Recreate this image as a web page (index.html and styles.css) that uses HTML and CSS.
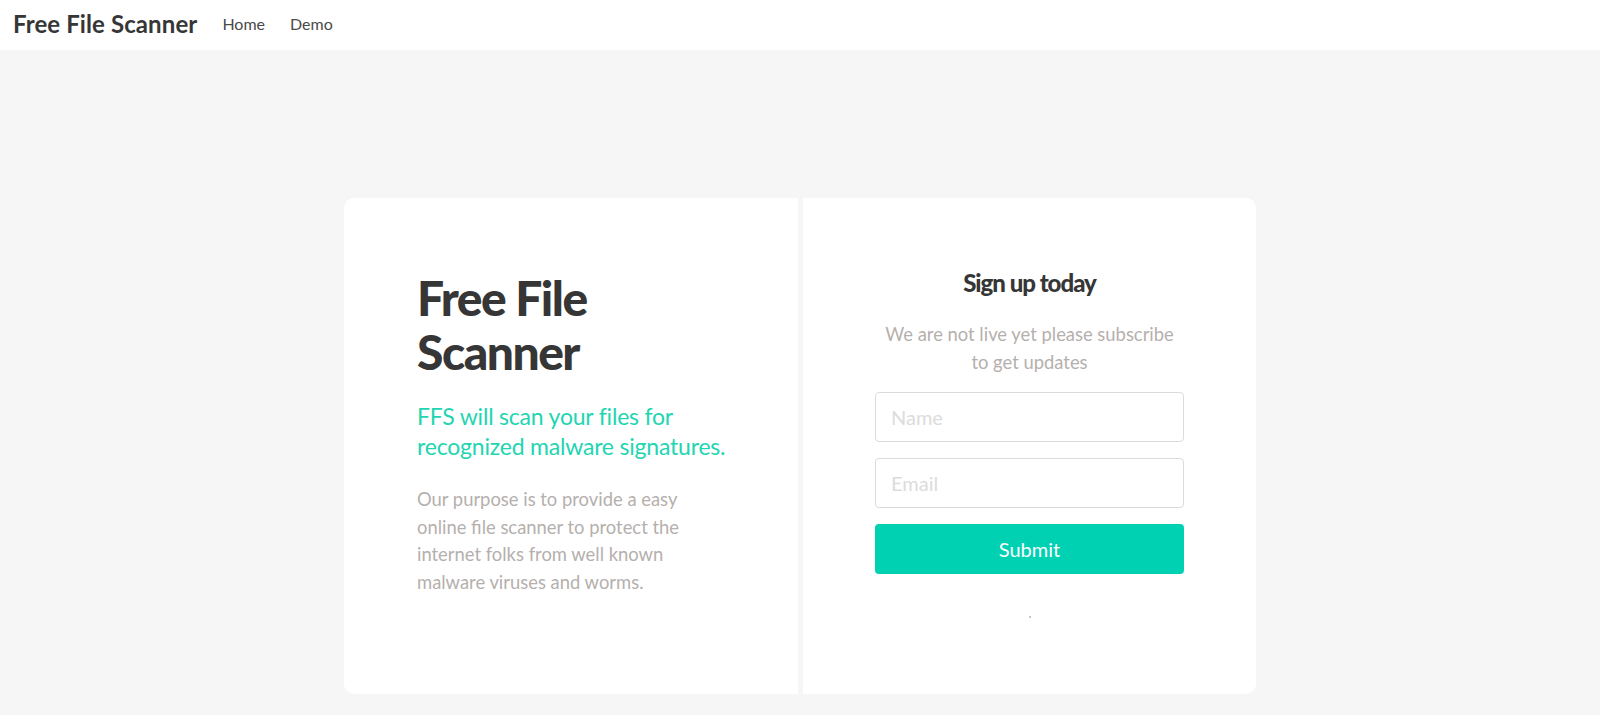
FILE: index.html
```html
<!DOCTYPE html>
<html lang="en">
<head>
<meta charset="utf-8">
<title>Free File Scanner</title>
<link rel="stylesheet" href="styles.css">
</head>
<body>
<nav class="navbar">
  <a class="brand" href="#">Free File Scanner</a>
  <a class="nav-item" href="#">Home</a>
  <a class="nav-item" href="#">Demo</a>
</nav>
<main class="page">
  <div class="card-pair">
    <section class="panel panel-left">
      <h1 class="title">Free File Scanner</h1>
      <h2 class="subtitle">FFS will scan your files for recognized malware signatures.</h2>
      <p class="lead">Our purpose is to provide a easy online file scanner to protect the internet folks from well known malware viruses and worms.</p>
    </section>
    <section class="panel panel-right">
      <h3 class="form-title">Sign up today</h3>
      <p class="lead centered">We are not live yet please subscribe to get updates</p>
      <form class="signup">
        <input class="field" type="text" placeholder="Name">
        <input class="field" type="email" placeholder="Email">
        <button class="submit" type="button">Submit</button>
      </form>
      <div class="dot-row"><span class="dot"></span></div>
    </section>
  </div>
</main>
</body>
</html>
```
FILE: styles.css
```css
* { box-sizing: border-box; }
html, body { margin: 0; padding: 0; }
body {
  background: #f6f6f6;
  font-family: "Lato", "Open Sans", sans-serif;
  color: #4a4a4a;
  min-height: 715px;
}
.navbar {
  height: 50px;
  background: #fff;
  display: flex;
  align-items: center;
  padding: 0 0 3px 13px;
}
.brand {
  font-size: 24px;
  font-weight: 700;
  color: #363636;
  text-decoration: none;
  margin-right: 25px;
  letter-spacing: 0.1px;
}
.nav-item {
  font-size: 16px;
  color: #4a4a4a;
  text-decoration: none;
  margin-right: 25px;
}
.page {
  padding-top: 148px;
  display: flex;
  justify-content: center;
}
.card-pair {
  display: grid;
  grid-template-columns: 454px 453px;
  gap: 5px;
  width: 912px;
}
.panel {
  background: #fff;
  height: 496px;
  min-width: 0;
}
.panel-left {
  border-radius: 10px 0 0 10px;
  padding: 73px 60px 0 73px;
}
.panel-right {
  border-radius: 0 10px 10px 0;
  padding: 71px 72px 0 72px;
  text-align: center;
}
.title {
  margin: 0;
  font-size: 48px;
  line-height: 54px;
  font-weight: 900;
  color: #363636;
  letter-spacing: -1.5px;
  max-width: 300px;
}
.subtitle {
  margin: 22px 0 0;
  font-size: 23px;
  line-height: 30px;
  font-weight: 400;
  color: #22d5b1;
  letter-spacing: -0.2px;
}
.lead {
  margin: 25px 0 0;
  font-size: 18.4px;
  line-height: 27.5px;
  color: #b5b0ad;
}
.panel-left .lead { max-width: 290px; }
.form-title {
  margin: 0;
  font-size: 24px;
  line-height: 27px;
  font-weight: 900;
  color: #363636;
  letter-spacing: -1px;
}
.centered {
  margin: 25px auto 0;
  max-width: 298px;
}
.signup {
  display: flex;
  flex-direction: column;
  gap: 16px;
  margin-top: 16px;
}
.field {
  height: 50px;
  width: 100%;
  border: 1px solid #dbdbdb;
  border-radius: 4px;
  padding: 0 15px;
  font-family: inherit;
  font-size: 20px;
  color: #363636;
  background: #fff;
  outline: none;
}
.field::placeholder { color: #dcdcdc; }
.submit {
  height: 50px;
  width: 100%;
  border: none;
  border-radius: 4px;
  background: #00d1b2;
  color: #fff;
  font-family: inherit;
  font-size: 20px;
  cursor: pointer;
}
.dot-row {
  display: flex;
  justify-content: center;
  margin-top: 42px;
}
.dot {
  width: 2px;
  height: 2px;
  background: #c9c3cf;
}
```
